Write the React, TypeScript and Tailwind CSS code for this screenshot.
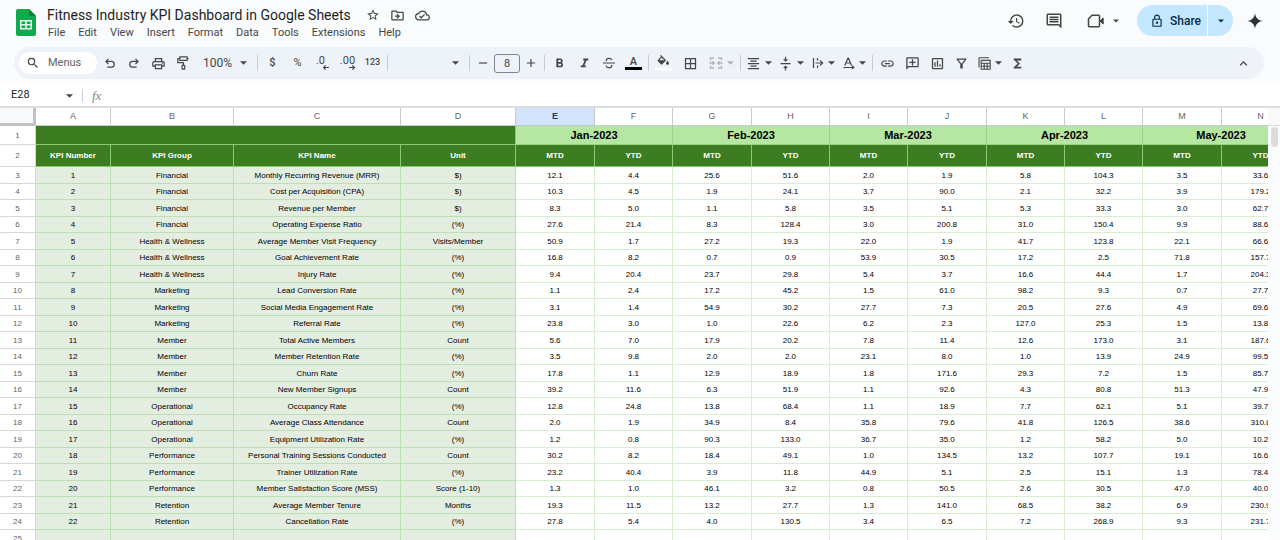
import type { ReactNode } from "react";
import {
  MdStarBorder,
  MdOutlineDriveFileMove,
  MdOutlineCloudDone,
  MdHistory,
  MdOutlineInsertComment,
  MdOutlineLock,
  MdSearch,
  MdOutlinePrint,
  MdFormatBold,
  MdFormatItalic,
  MdFormatAlignCenter,
  MdVerticalAlignCenter,
  MdBorderAll,
  MdLink,
  MdOutlineAddComment,
  MdOutlineInsertChart,
  MdOutlineFilterAlt,
  MdFunctions,
  MdKeyboardArrowUp,
  MdAdd,
  MdRemove,
} from "react-icons/md";

const menus = ["File", "Edit", "View", "Insert", "Format", "Data", "Tools", "Extensions", "Help"];
const months = ["Jan-2023", "Feb-2023", "Mar-2023", "Apr-2023", "May-2023"];
const letters = ["A", "B", "C", "D", "E", "F", "G", "H", "I", "J", "K", "L", "M", "N"];
const columnWidths = [
  "w-[36px]", "w-[75px]", "w-[123px]", "w-[167px]", "w-[115px]",
  "w-[79px]", "w-[78px]", "w-[79px]", "w-[78px]", "w-[78px]",
  "w-[79px]", "w-[78px]", "w-[78px]", "w-[79px]", "w-[78px]",
];

type Row = [string, string, string, string];
const rows: Row[] = [
  ["Financial", "Monthly Recurring Revenue (MRR)", "$)", "12.1 4.4 25.6 51.6 2.0 1.9 5.8 104.3 3.5 33.6"],
  ["Financial", "Cost per Acquisition (CPA)", "$)", "10.3 4.5 1.9 24.1 3.7 90.0 2.1 32.2 3.9 179.2"],
  ["Financial", "Revenue per Member", "$)", "8.3 5.0 1.1 5.8 3.5 5.1 5.3 33.3 3.0 62.7"],
  ["Financial", "Operating Expense Ratio", "(%)", "27.6 21.4 8.3 128.4 3.0 200.8 31.0 150.4 9.9 88.6"],
  ["Health & Wellness", "Average Member Visit Frequency", "Visits/Member", "50.9 1.7 27.2 19.3 22.0 1.9 41.7 123.8 22.1 66.6"],
  ["Health & Wellness", "Goal Achievement Rate", "(%)", "16.8 8.2 0.7 0.9 53.9 30.5 17.2 2.5 71.8 157.7"],
  ["Health & Wellness", "Injury Rate", "(%)", "9.4 20.4 23.7 29.8 5.4 3.7 16.6 44.4 1.7 204.3"],
  ["Marketing", "Lead Conversion Rate", "(%)", "1.1 2.4 17.2 45.2 1.5 61.0 98.2 9.3 0.7 27.7"],
  ["Marketing", "Social Media Engagement Rate", "(%)", "3.1 1.4 54.9 30.2 27.7 7.3 20.5 27.6 4.9 69.6"],
  ["Marketing", "Referral Rate", "(%)", "23.8 3.0 1.0 22.6 6.2 2.3 127.0 25.3 1.5 13.8"],
  ["Member", "Total Active Members", "Count", "5.6 7.0 17.9 20.2 7.8 11.4 12.6 173.0 3.1 187.6"],
  ["Member", "Member Retention Rate", "(%)", "3.5 9.8 2.0 2.0 23.1 8.0 1.0 13.9 24.9 99.5"],
  ["Member", "Churn Rate", "(%)", "17.8 1.1 12.9 18.9 1.8 171.6 29.3 7.2 1.5 85.7"],
  ["Member", "New Member Signups", "Count", "39.2 11.6 6.3 51.9 1.1 92.6 4.3 80.8 51.3 47.9"],
  ["Operational", "Occupancy Rate", "(%)", "12.8 24.8 13.8 68.4 1.1 18.9 7.7 62.1 5.1 39.7"],
  ["Operational", "Average Class Attendance", "Count", "2.0 1.9 34.9 8.4 35.8 79.6 41.8 126.5 38.6 310.8"],
  ["Operational", "Equipment Utilization Rate", "(%)", "1.2 0.8 90.3 133.0 36.7 35.0 1.2 58.2 5.0 10.2"],
  ["Performance", "Personal Training Sessions Conducted", "Count", "30.2 8.2 18.4 49.1 1.0 134.5 13.2 107.7 19.1 16.6"],
  ["Performance", "Trainer Utilization Rate", "(%)", "23.2 40.4 3.9 11.8 44.9 5.1 2.5 15.1 1.3 78.4"],
  ["Performance", "Member Satisfaction Score (MSS)", "Score (1-10)", "1.3 1.0 46.1 3.2 0.8 50.5 2.6 30.5 47.0 40.0"],
  ["Retention", "Average Member Tenure", "Months", "19.3 11.5 13.2 27.7 1.3 141.0 68.5 38.2 6.9 230.9"],
  ["Retention", "Cancellation Rate", "(%)", "27.8 5.4 4.0 130.5 3.4 6.5 7.2 268.9 9.3 231.7"],
];

function Caret({ className = "" }: { className?: string }) {
  return (
    <svg viewBox="0 0 8 4" className={`h-1 w-[7px] shrink-0 fill-current ${className}`} aria-hidden="true">
      <path d="M0 0h8L4 4z" />
    </svg>
  );
}

function Tool({ label, className = "w-[25px]", children }: { label: string; className?: string; children: ReactNode }) {
  return (
    <button type="button" aria-label={label} className={`flex h-6 shrink-0 items-center justify-center ${className}`}>
      {children}
    </button>
  );
}

function DropTool({ label, className = "w-8", children }: { label: string; className?: string; children: ReactNode }) {
  return (
    <button type="button" aria-label={label} className={`flex h-6 shrink-0 items-center justify-center gap-1 ${className}`}>
      {children}
      <Caret />
    </button>
  );
}

function Sep() {
  return <span className="mx-0.5 h-4 w-px shrink-0 bg-[#c9ccd1]" />;
}

function SheetsLogo() {
  return (
    <svg viewBox="0 0 20 27" className="h-[27px] w-5" aria-hidden="true">
      <path d="M2 0h11l7 7v18a2 2 0 0 1-2 2H2a2 2 0 0 1-2-2V2a2 2 0 0 1 2-2z" fill="#12a84b" />
      <path d="M13 0l7 7h-5.500a1.500 1.500 0 0 1-1.500-1.500z" fill="#0b7f36" />
      <path d="M4 11h12v9.500H4zM5.500 12.600v2.400h3.700v-2.400zM10.800 12.600v2.400h3.700v-2.400zM5.500 16.500v2.400h3.700v-2.400zM10.800 16.500v2.400h3.700v-2.400z" fill="#e4f7ea" fillRule="evenodd" />
    </svg>
  );
}

function TitleBar() {
  return (
    <header className="flex h-[47px] shrink-0 items-start pr-[17px] pl-4">
      <div className="mt-[9px] mr-[11px]">
        <SheetsLogo />
      </div>
      <div className="mt-[5px] flex flex-col">
        <div className="flex h-5 items-center text-[#444746]">
          <h1 className="text-[14px] leading-5 whitespace-nowrap text-[#1f1f1f]">Fitness Industry KPI Dashboard in Google Sheets</h1>
          <button type="button" aria-label="Star" className="ml-[15px]"><MdStarBorder size={14} /></button>
          <button type="button" aria-label="Move" className="ml-[10px]"><MdOutlineDriveFileMove size={15} /></button>
          <button type="button" aria-label="Document status" className="ml-[10px]"><MdOutlineCloudDone size={15} /></button>
        </div>
        <nav className="flex h-4 gap-[13px] pl-px text-[11px] leading-4 text-[#444746]">
          {menus.map((m) => (
            <button type="button" key={m}>{m}</button>
          ))}
        </nav>
      </div>
      <div className="mt-[5px] ml-auto flex h-[31px] items-center text-[#444746]">
        <button type="button" aria-label="Version history"><MdHistory size={18} /></button>
        <button type="button" aria-label="Comments" className="ml-5"><MdOutlineInsertComment size={18} /></button>
        <button type="button" aria-label="Join a call" className="ml-6 flex items-center gap-2">
          <svg viewBox="0 0 18 14" className="h-[14px] w-[18px]" fill="none" stroke="currentColor" strokeWidth="1.500" strokeLinejoin="round" aria-hidden="true">
            <path d="M5 1.200h6.500a1 1 0 0 1 1 1v9.600a1 1 0 0 1-1 1h-9a1 1 0 0 1-1-1V4.700z" />
            <path d="M13 7l3.200-3v6z" fill="currentColor" strokeWidth="1" />
          </svg>
          <Caret className="!w-[6px]" />
        </button>
        <div className="ml-[18px] flex h-[31px] text-[12px] font-medium text-[#0b2b4b]">
          <button type="button" className="flex w-[70px] items-center gap-[6px] rounded-l-full bg-[#c2e7ff] pl-[13px]">
            <MdOutlineLock size={14} className="shrink-0" />
            Share
          </button>
          <button type="button" aria-label="Quick sharing actions" className="ml-px flex w-[25px] items-center justify-center rounded-r-full bg-[#c2e7ff]">
            <Caret className="!w-[6px]" />
          </button>
        </div>
        <button type="button" aria-label="Gemini" className="ml-[14px]">
          <svg viewBox="0 0 16 16" className="h-4 w-4 fill-[#303134]" aria-hidden="true">
            <path d="M8 0C8.500 4.800 11.200 7.500 16 8 11.200 8.500 8.500 11.200 8 16 7.500 11.200 4.800 8.500 0 8 4.800 7.500 7.500 4.800 8 0z" />
          </svg>
        </button>
      </div>
    </header>
  );
}

function DecimalIcon({ text, right = false }: { text: string; right?: boolean }) {
  return (
    <span className="flex flex-col items-end">
      <span className={right ? "text-[11px] leading-[9px]" : "pr-1 text-[11px] leading-[9px]"}>{text}</span>
      <svg viewBox="0 0 6 5" className="h-[5px] w-[6px]" fill="none" stroke="currentColor" strokeWidth="1.100" aria-hidden="true">
        {right ? <path d="M0 2.500h5.400M3.300.400l2.100 2.100-2.100 2.100" /> : <path d="M6 2.500H.600M2.700.400L.600 2.500l2.100 2.100" />}
      </svg>
    </span>
  );
}

function Toolbar() {
  return (
    <div role="toolbar" className="mr-4 ml-[14px] flex h-8 shrink-0 items-center rounded-full bg-[#eef2f9] pr-3 pl-[5px] text-[12px] text-[#444746]">
      <label className="mr-px flex h-[22px] w-[78px] items-center gap-2 rounded-full bg-white pl-[7px]">
        <MdSearch size={14} className="shrink-0" />
        <input type="text" aria-label="Search the menus" placeholder="Menus" className="w-11 bg-transparent text-[11px] outline-none placeholder:text-[#5f6368]" />
      </label>
      <Tool label="Undo" className="w-6">
        <svg viewBox="0 0 10 10" className="h-[10px] w-[10px]" fill="none" stroke="currentColor" strokeWidth="1.200" aria-hidden="true">
          <path d="M3.500.800L.900 3.400 3.500 6M1 3.400h5.400a2.900 2.900 0 0 1 0 5.800H2.300" />
        </svg>
      </Tool>
      <Tool label="Redo" className="w-6">
        <svg viewBox="0 0 10 10" className="h-[10px] w-[10px]" fill="none" stroke="currentColor" strokeWidth="1.200" aria-hidden="true">
          <path d="M6.500.800l2.600 2.600L6.500 6M9 3.400H3.600a2.900 2.900 0 0 0 0 5.800h4.100" />
        </svg>
      </Tool>
      <Tool label="Print"><MdOutlinePrint size={15} /></Tool>
      <Tool label="Paint format" className="w-6">
        <svg viewBox="0 0 12 14" className="h-[14px] w-3" fill="none" stroke="currentColor" strokeWidth="1.200" strokeLinejoin="round" aria-hidden="true">
          <path d="M2.800.900h7.400v3.400H2.800zM2.800 2.600H.800v4h5.600v2.600M5.100 9.400h2.600v3.700H5.100zM10.200 2.600h1.400" />
        </svg>
      </Tool>
      <span className="grid w-[60px] items-center">
        <select aria-label="Zoom" className="col-start-1 row-start-1 appearance-none bg-transparent pl-2 text-[12px] outline-none">
          <option>100%</option>
        </select>
        <Caret className="pointer-events-none col-start-1 row-start-1 mr-2 justify-self-end" />
      </span>
      <Sep />
      <Tool label="Currency"><span className="text-[11px] font-medium">$</span></Tool>
      <Tool label="Percent"><span className="text-[11px]">%</span></Tool>
      <Tool label="Decrease decimal places"><DecimalIcon text=".0" /></Tool>
      <Tool label="Increase decimal places"><DecimalIcon text=".00" right /></Tool>
      <Tool label="More formats"><span className="text-[9px] font-medium">123</span></Tool>
      <Sep />
      <span className="grid h-6 w-[77px] items-center">
        <select aria-label="Font" className="col-start-1 row-start-1 appearance-none bg-transparent outline-none">
          <option></option>
        </select>
        <Caret className="pointer-events-none col-start-1 row-start-1 mr-2 justify-self-end" />
      </span>
      <Sep />
      <Tool label="Decrease font size" className="w-[22px]"><MdRemove size={14} /></Tool>
      <input aria-label="Font size" defaultValue="8" className="h-[19px] w-[26px] shrink-0 rounded-[3px] border border-[#80868b] bg-transparent text-center text-[11px] outline-none" />
      <Tool label="Increase font size" className="w-[22px]"><MdAdd size={14} /></Tool>
      <Sep />
      <Tool label="Bold"><MdFormatBold size={15} /></Tool>
      <Tool label="Italic" className="w-6"><MdFormatItalic size={15} /></Tool>
      <Tool label="Strikethrough">
        <svg viewBox="0 0 12 12" className="h-3 w-3" fill="none" stroke="currentColor" strokeWidth="1.200" aria-hidden="true">
          <path d="M0 6h12M3.300 4.200C3 2.200 4.300 1.300 6 1.300c1.300 0 2.300.600 2.800 1.700M3 8.800c.500 1.300 1.600 2 3.100 2 1.900 0 3-1.200 2.700-2.900" />
        </svg>
      </Tool>
      <Tool label="Text color">
        <span className="flex flex-col items-center">
          <span className="text-[11px] leading-[11px] font-medium">A</span>
          <span className="h-[3px] w-[17px] bg-black" />
        </span>
      </Tool>
      <Sep />
      <Tool label="Fill color">
        <svg viewBox="0 0 17 16" className="h-4 w-[17px] fill-current" aria-hidden="true">
          <path d="M5 .700l.900-.700 5.300 5.300L7.300 9.200a1 1 0 0 1-1.400 0L2.900 6.200a1 1 0 0 1 0-1.400L5.900 1.900zM6.800 2.700L4.200 5.300h5.200z" />
          <path d="M12.500 5.800s1.500 1.600 1.500 2.500a1.500 1.500 0 0 1-3 0c0-.900 1.500-2.500 1.500-2.500z" />
          <path d="M0 12.500h17v3H0z" fill="#fff" />
        </svg>
      </Tool>
      <Tool label="Borders" className="w-7"><MdBorderAll size={15} /></Tool>
      <DropTool label="Merge cells" className="w-[34px] text-[#b0b3b8]">
        <svg viewBox="0 0 14 12" className="h-3 w-[14px]" fill="none" stroke="currentColor" strokeWidth="1.300" aria-hidden="true">
          <path d="M1.500 3.500v-2.500H5M12.500 3.500v-2.500H9M1.500 8.500v2.500H5M12.500 8.500v2.500H9M.500 6H5M13.500 6H9M3.500 4.300L5.200 6 3.500 7.700M10.500 4.300L8.800 6l1.700 1.700" />
        </svg>
      </DropTool>
      <Sep />
      <DropTool label="Horizontal align"><MdFormatAlignCenter size={15} /></DropTool>
      <DropTool label="Vertical align"><MdVerticalAlignCenter size={15} /></DropTool>
      <DropTool label="Text wrapping">
        <svg viewBox="0 0 12 12" className="h-3 w-3" fill="none" stroke="currentColor" strokeWidth="1.200" aria-hidden="true">
          <path d="M1.500 1v10M5.500 1v2.500M5.500 8.500V11M3.500 6h7M8 3.400L10.600 6 8 8.600" />
        </svg>
      </DropTool>
      <DropTool label="Text rotation" className="w-[31px]">
        <svg viewBox="0 0 12 12" className="h-3 w-3" fill="none" stroke="currentColor" strokeWidth="1.200" aria-hidden="true">
          <path d="M1.800 8.500L5 1h.400l3.200 7.500M3 6h4.400M.500 10.500h10M9 8.700l1.900 1.800L9 12" />
        </svg>
      </DropTool>
      <Sep />
      <Tool label="Insert link"><MdLink size={15} /></Tool>
      <Tool label="Insert comment"><MdOutlineAddComment size={15} className="-scale-x-100" /></Tool>
      <Tool label="Insert chart" className="w-6"><MdOutlineInsertChart size={15} /></Tool>
      <Tool label="Create a filter"><MdOutlineFilterAlt size={15} /></Tool>
      <DropTool label="Table views" className="w-[31px]">
        <svg viewBox="0 0 13 13" className="h-[13px] w-[13px]" fill="none" stroke="currentColor" strokeWidth="1.100" aria-hidden="true">
          <path d="M1 10.500V1.500a.700.700 0 0 1 .700-.700h9.300M3.200 3.400h9v8.800h-9zM3.200 6.200h9M3.200 9.200h9M6.200 6.200v6M9.200 6.200v6" />
        </svg>
      </DropTool>
      <Tool label="Functions"><MdFunctions size={15} /></Tool>
      <Tool label="Hide the menus" className="ml-auto w-[18px]"><MdKeyboardArrowUp size={15} /></Tool>
    </div>
  );
}

function FormulaBar() {
  return (
    <div className="mt-[5px] flex h-[22px] shrink-0 items-center bg-white pt-px pl-[11px] text-[#1f1f1f]">
      <input aria-label="Name box" defaultValue="E28" className="w-[55px] bg-transparent text-[11px] outline-none" />
      <button type="button" aria-label="Named ranges" className="text-[#444746]"><Caret /></button>
      <span className="mx-[9px] h-[13px] w-px bg-[#d0d3d6]" />
      <span className="font-['Liberation_Serif',serif] text-[13px] text-[#80868b] italic">fx</span>
      <input aria-label="Formula" className="ml-2 flex-1 bg-transparent text-[11px] outline-none" />
    </div>
  );
}

const rowHead = "border-r border-b border-[#d5d7d9] bg-white font-normal text-[#5f6368]";
const dark = "border-r border-b border-[#8cc972] bg-[#3b7d20] font-bold text-white";
const pale = "border-r border-b border-[#bcdfb4] bg-[#e3ede0]";
const plain = "border-r border-b border-[#d9edcf] bg-white";

function Grid() {
  return (
    <div className="flex min-h-0 flex-1 border-t-2 border-[#dcdedf] bg-white">
      <div className="min-w-0 flex-1 overflow-hidden">
        <table className="w-px table-fixed border-separate border-spacing-0 text-center font-['Liberation_Sans',Arial,sans-serif] text-[8px] leading-[15px] whitespace-nowrap text-black [&_td]:p-0 [&_th]:p-0">
          <colgroup>
            {columnWidths.map((w, i) => <col key={i} className={w} />)}
          </colgroup>
          <thead>
            <tr className="h-[18px] text-[9px]">
              <th className="border-r-3 border-b-3 border-[#c0c2c4] bg-[#f8f9fa]" />
              {letters.map((l) => (
                <th
                  key={l}
                  scope="col"
                  className={l === "E" ? "border-r border-b border-[#c4c7c9] bg-[#d3e3fd] font-bold text-[#1f3a5f]" : "border-r border-b border-[#c9cccf] bg-white font-normal text-[#5f6368]"}
                >
                  {l}
                </th>
              ))}
            </tr>
          </thead>
          <tbody>
            <tr className="h-[19px]">
              <th scope="row" className={rowHead}>1</th>
              <td colSpan={4} className={dark} />
              {months.map((m) => (
                <th key={m} colSpan={2} className="border-r border-b border-[#98d585] bg-[#b6e7a2] text-[11px] font-bold text-black">{m}</th>
              ))}
            </tr>
            <tr className="h-[22px]">
              <th scope="row" className={rowHead}>2</th>
              {["KPI Number", "KPI Group", "KPI Name", "Unit"].map((h) => <th key={h} className={dark}>{h}</th>)}
              {months.flatMap((m) => ["MTD", "YTD"].map((h) => <th key={m + h} className={dark}>{h}</th>))}
            </tr>
            {rows.map(([group, name, unit, values], i) => (
              <tr key={name} className={i % 2 === 0 ? "h-[17px]" : "h-4"}>
                <th scope="row" className={rowHead}>{i + 3}</th>
                <td className={pale}>{i + 1}</td>
                <td className={pale}>{group}</td>
                <td className={pale}>{name}</td>
                <td className={pale}>{unit}</td>
                {values.split(" ").map((v, j) => <td key={j} className={plain}>{v}</td>)}
              </tr>
            ))}
            <tr className="h-[17px]">
              <th scope="row" className={rowHead}>25</th>
              {letters.map((l, i) => <td key={l} className={i < 4 ? pale : plain} />)}
            </tr>
          </tbody>
        </table>
      </div>
      <div className="w-3 shrink-0 bg-[#fbfcfe]">
        <div className="h-[18px] border-b border-[#dcdedf] bg-[#f8f9fa]" />
        <div className="mx-auto mt-px h-5 w-[7px] rounded-full bg-[#dadce0]" />
      </div>
    </div>
  );
}

export default function App() {
  return (
    <div className="flex h-screen flex-col overflow-hidden bg-[#f9fbfd] font-[Roboto,sans-serif]">
      <TitleBar />
      <Toolbar />
      <FormulaBar />
      <Grid />
    </div>
  );
}
